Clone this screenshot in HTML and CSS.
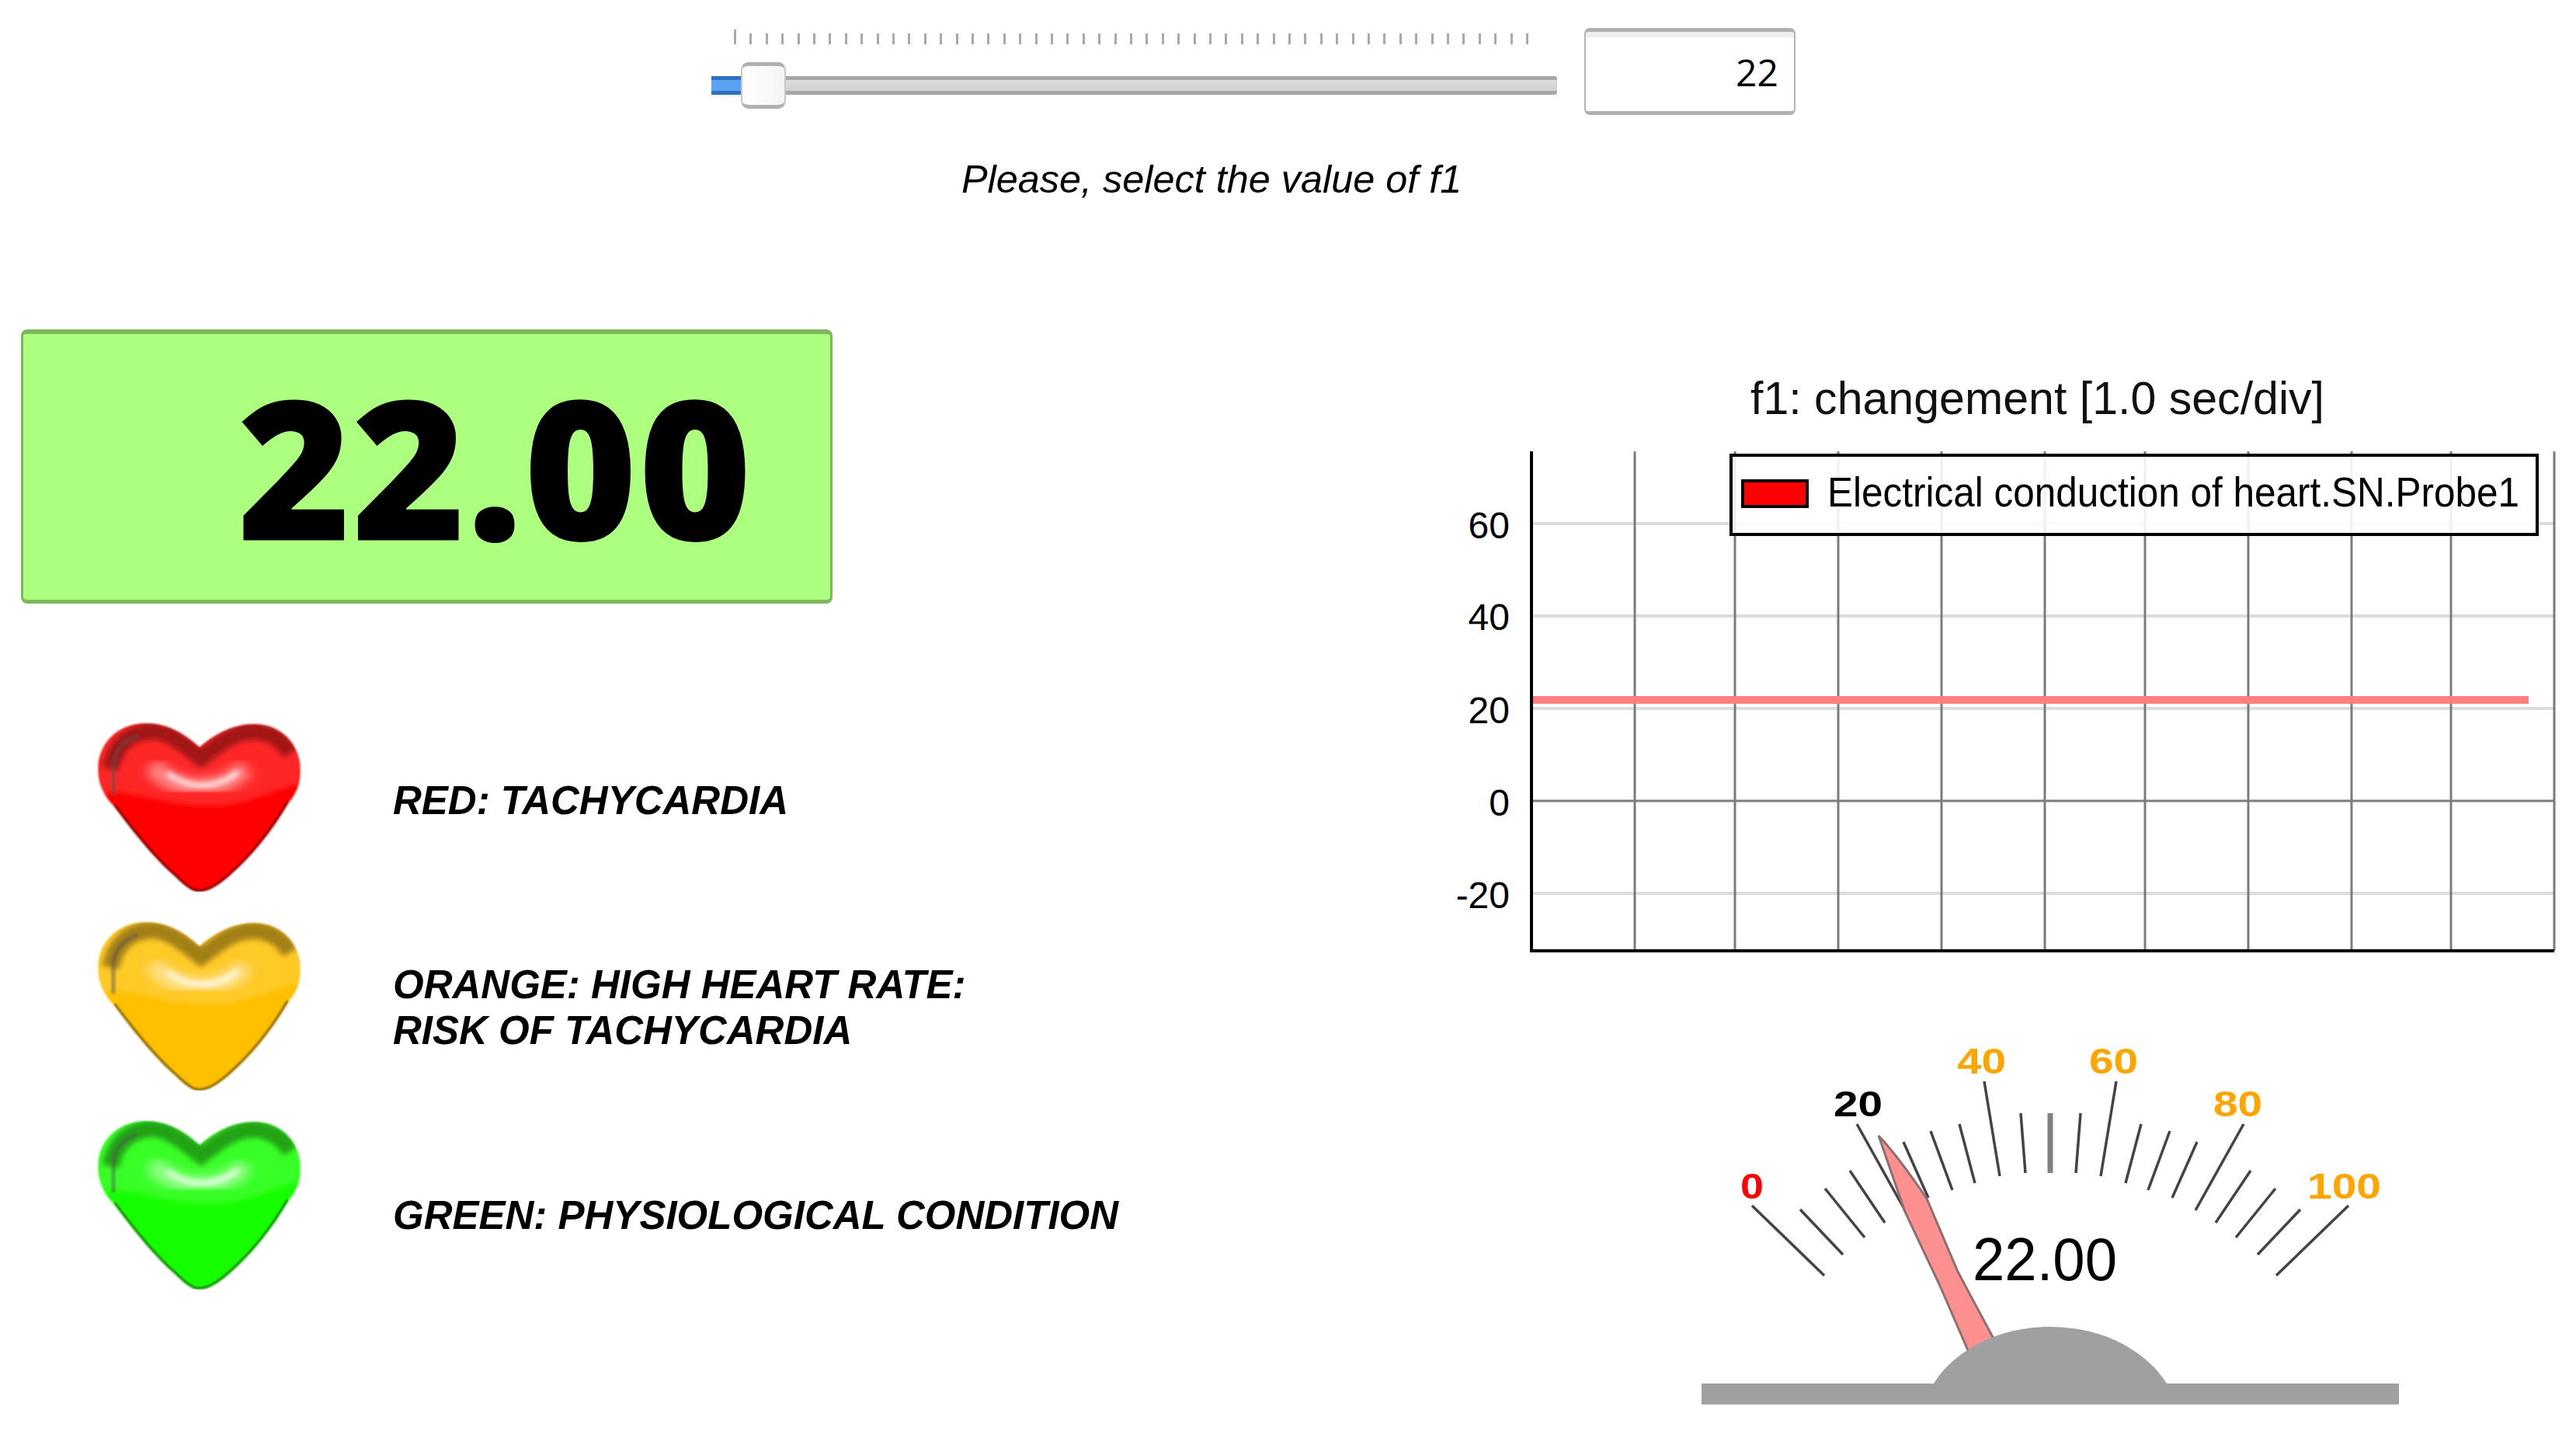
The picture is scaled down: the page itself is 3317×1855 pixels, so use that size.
FILE: index.html
```html
<!DOCTYPE html>
<html lang="en">
<head>
<meta charset="utf-8">
<title>Electrical conduction of heart</title>
<link rel="stylesheet" href="styles.css">
</head>
<body>
<svg class="defs" width="0" height="0" aria-hidden="true">
  <defs>
    <clipPath id="heart-clip"><path d="M132 32C110 12 88 1 62 1C25 1 0 28 0 60C0 80 8 96 20 108C44 140 72 176 100 200C112 212 122 220 131 220C144 220 156 212 170 200C200 174 226 142 248 104C258 92 263 80 263 62C263 28 238 2 203 2C176 2 153 14 132 32Z"/></clipPath>
    <filter id="soft" x="-20%" y="-20%" width="140%" height="140%"><feGaussianBlur stdDeviation="3"/></filter>
    <filter id="softer" x="-20%" y="-20%" width="140%" height="140%"><feGaussianBlur stdDeviation="7"/></filter>
    <filter id="edge" x="-5%" y="-5%" width="110%" height="110%"><feGaussianBlur stdDeviation="1"/></filter>
    <symbol id="heart" viewBox="0 0 263 220">
      <g filter="url(#edge)">
      <g clip-path="url(#heart-clip)">
        <rect width="263" height="220" fill="currentColor"/>
        <path d="M0 0H263V80C210 92 190 112 130 108C90 106 50 92 16 90L0 100Z" fill="#fff" opacity=".15" filter="url(#soft)"/>
        <path d="M20 108C44 140 72 176 100 200C112 212 122 220 131 220C144 220 156 212 170 200C200 174 226 142 248 104" fill="none" stroke="#000" stroke-opacity=".42" stroke-width="7"/>
        <path d="M16 60C22 34 36 16 62 12C92 8 112 30 134 46C156 30 176 10 206 12C226 14 240 24 250 40" fill="none" stroke="#000" stroke-opacity=".36" stroke-width="22" filter="url(#soft)"/>
        <path d="M20 94V58C20 38 34 22 52 18" fill="none" stroke="#555" stroke-opacity=".45" stroke-width="6"/>
        <path d="M70 56C90 78 110 84 134 84C156 84 176 76 192 58" fill="none" stroke="#fff" stroke-opacity=".45" stroke-width="24" filter="url(#softer)"/>
        <path d="M90 66C108 78 122 82 134 82C150 82 168 76 182 64" fill="none" stroke="#fff" stroke-opacity=".9" stroke-width="6" filter="url(#soft)"/>
      </g>
      </g>
    </symbol>
  </defs>
</svg>

<main class="page">
  <section class="controls">
    <div class="slider-row">
      <div class="slider">
        <div class="ticks"></div>
        <div class="track">
          <div class="track-fill"></div>
          <div class="thumb"></div>
        </div>
      </div>
      <div class="number-box">22</div>
    </div>
    <p class="caption">Please, select the value of f1</p>
  </section>

  <section class="panels">
    <div class="left-panel">
      <div class="readout">22.00</div>
      <ul class="legend-list">
        <li class="status-row">
          <svg class="heart heart-red"><use href="#heart"/></svg>
          <p class="status status-up">RED: TACHYCARDIA</p>
        </li>
        <li class="status-row">
          <svg class="heart heart-orange"><use href="#heart"/></svg>
          <p class="status status-mid">ORANGE: HIGH HEART RATE:<br>RISK OF TACHYCARDIA</p>
        </li>
        <li class="status-row">
          <svg class="heart heart-green"><use href="#heart"/></svg>
          <p class="status status-down">GREEN: PHYSIOLOGICAL CONDITION</p>
        </li>
      </ul>
    </div>

    <div class="right-panel">
      <svg class="chart" viewBox="1860 470 1457 770" width="1457" height="770">
        <text class="chart-title" x="2254" y="533" textLength="739" lengthAdjust="spacingAndGlyphs">f1: changement [1.0 sec/div]</text>
        <g class="grid-h">
          <line x1="1971" x2="3289" y1="674" y2="674"/>
          <line x1="1971" x2="3289" y1="793" y2="793"/>
          <line x1="1971" x2="3289" y1="912" y2="912"/>
          <line x1="1971" x2="3289" y1="1150" y2="1150"/>
        </g>
        <g class="grid-v">
          <line x1="2105" x2="2105" y1="581" y2="1224"/>
          <line x1="2234" x2="2234" y1="581" y2="1224"/>
          <line x1="2367" x2="2367" y1="581" y2="1224"/>
          <line x1="2500" x2="2500" y1="581" y2="1224"/>
          <line x1="2633" x2="2633" y1="581" y2="1224"/>
          <line x1="2762" x2="2762" y1="581" y2="1224"/>
          <line x1="2895" x2="2895" y1="581" y2="1224"/>
          <line x1="3028" x2="3028" y1="581" y2="1224"/>
          <line x1="3156" x2="3156" y1="581" y2="1224"/>
          <line x1="3289" x2="3289" y1="581" y2="1224"/>
          <line x1="1971" x2="3289" y1="1031" y2="1031"/>
        </g>
        <line class="series" x1="1971" x2="3256" y1="901" y2="901"/>
        <path class="axis" d="M1972 581V1224H3289"/>
        <g class="y-labels">
          <text x="1944" y="693">60</text>
          <text x="1944" y="811">40</text>
          <text x="1944" y="931">20</text>
          <text x="1944" y="1050">0</text>
          <text x="1944" y="1169">-20</text>
        </g>
        <rect class="legend-box" x="2229" y="586" width="1038" height="102"/>
        <rect class="legend-swatch" x="2244" y="619" width="83" height="33"/>
        <text class="legend-text" x="2353" y="652" textLength="891" lengthAdjust="spacingAndGlyphs">Electrical conduction of heart.SN.Probe1</text>
      </svg>

      <svg class="gauge" viewBox="2180 1340 920 475" width="920" height="475">
        <g class="tick">
          <line x1="2256" y1="1552" x2="2349" y2="1642"/>
          <line x1="2318" y1="1557" x2="2373" y2="1615"/>
          <line x1="2350" y1="1530" x2="2401" y2="1593"/>
          <line x1="2382" y1="1507" x2="2427" y2="1574"/>
          <line x1="2391" y1="1447" x2="2453" y2="1558"/>
          <line x1="2451" y1="1470" x2="2483" y2="1542"/>
          <line x1="2486" y1="1456" x2="2514" y2="1532"/>
          <line x1="2523" y1="1447" x2="2543" y2="1523"/>
          <line x1="2555" y1="1392" x2="2575" y2="1514"/>
          <line x1="2602" y1="1433" x2="2608" y2="1510"/>
          <line x1="2679" y1="1433" x2="2673" y2="1510"/>
          <line x1="2725" y1="1392" x2="2705" y2="1514"/>
          <line x1="2757" y1="1447" x2="2737" y2="1523"/>
          <line x1="2794" y1="1456" x2="2766" y2="1532"/>
          <line x1="2829" y1="1470" x2="2797" y2="1542"/>
          <line x1="2889" y1="1447" x2="2827" y2="1558"/>
          <line x1="2898" y1="1507" x2="2853" y2="1574"/>
          <line x1="2930" y1="1530" x2="2879" y2="1593"/>
          <line x1="2962" y1="1557" x2="2907" y2="1615"/>
          <line x1="3024" y1="1552" x2="2931" y2="1642"/>
        </g>
        <line class="tick-mid" x1="2640" y1="1433" x2="2640" y2="1510"/>
        <g class="scale">
          <text class="scale-red" x="2241" y="1543" textLength="30" lengthAdjust="spacingAndGlyphs">0</text>
          <text class="scale-black" x="2361" y="1437" textLength="63" lengthAdjust="spacingAndGlyphs">20</text>
          <text class="scale-orange" x="2520" y="1382" textLength="63" lengthAdjust="spacingAndGlyphs">40</text>
          <text class="scale-orange" x="2690" y="1382" textLength="63" lengthAdjust="spacingAndGlyphs">60</text>
          <text class="scale-orange" x="2850" y="1437" textLength="63" lengthAdjust="spacingAndGlyphs">80</text>
          <text class="scale-orange" x="2971" y="1543" textLength="95" lengthAdjust="spacingAndGlyphs">100</text>
        </g>
        <text class="gauge-value" x="2540" y="1648" textLength="186" lengthAdjust="spacingAndGlyphs">22.00</text>
        <path class="needle" d="M2419 1462C2438 1482 2462 1515 2481 1543L2521 1637L2568 1725L2537 1745L2497 1653L2453 1560Z"/>
        <path class="hub" d="M2191 1781H2490C2512 1745 2565 1708 2640 1708C2715 1708 2768 1745 2790 1781H3089V1808H2191Z"/>
      </svg>
    </div>
  </section>
</main>
</body>
</html>
```

FILE: styles.css
```css
* { box-sizing: border-box; }

html, body {
  margin: 0;
  padding: 0;
  background: #fff;
}

body {
  width: 3317px;
  height: 1855px;
  overflow: hidden;
  font-family: "Liberation Sans", Arial, sans-serif;
  color: #000;
}

.defs { position: absolute; }

.page {
  display: flex;
  flex-direction: column;
  width: 100%;
  height: 100%;
}

/* top slider */
.controls {
  height: 424px;
  padding: 34px 0 0 916px;
}

.slider-row {
  display: flex;
  gap: 35px;
}

.slider {
  width: 1089px;
  padding-top: 4px;
}

.ticks {
  width: 1023px;
  height: 19px;
  margin-left: 29px;
  background:
    linear-gradient(#a8a8a8, #a8a8a8) 0 0 / 3px 5px no-repeat,
    linear-gradient(#fff 0 5px, transparent 5px),
    repeating-linear-gradient(90deg, #a8a8a8 0 3px, transparent 3px 20.4px);
}

.track {
  position: relative;
  height: 24px;
  margin-top: 41px;
  border-radius: 3px;
  border-top: 5px solid #a8a8a8;
  border-bottom: 5px solid #a8a8a8;
  background: linear-gradient(#dcdcdc, #d2d2d2);
}

.track-fill {
  width: 38px;
  height: 100%;
  background: #5aa2f2;
  box-shadow: 0 -5px 0 #2d70bd, 0 5px 0 #2d70bd;
}

.thumb {
  position: absolute;
  left: 38px;
  top: -23px;
  width: 58px;
  height: 60px;
  border: 2px solid #c8c8c8;
  border-top: 5px solid #b0b0b0;
  border-bottom: 5px solid #b0b0b0;
  border-radius: 10px;
  background: linear-gradient(90deg, #fff, #f4f4f4);
}

.number-box {
  width: 272px;
  height: 112px;
  margin-top: 2px;
  padding: 24px 20px 0 0;
  border: 2px solid #b4b4b4;
  border-top: 5px solid #b0b0b0;
  border-bottom: 5px solid #b0b0b0;
  border-radius: 7px;
  background: linear-gradient(#eee 0 7px, #fff 7px);
  font-family: "Open Sans", sans-serif;
  font-size: 48px;
  line-height: 56px;
  text-align: right;
}

.caption {
  margin: 55px 0 0 322px;
  font-size: 50.4px;
  line-height: 56px;
  font-style: italic;
}

/* main area */
.panels {
  display: flex;
  flex: 1;
}

.left-panel {
  width: 1860px;
  padding-left: 27px;
}

.readout {
  width: 1045px;
  height: 353px;
  padding: 0 0 0 276px;
  border: 3px solid #7eb85c;
  border-top: 6px solid #7eb85c;
  border-bottom: 5px solid #7eb85c;
  border-radius: 8px;
  background: #acff7f;
  font-family: "Open Sans", sans-serif;
  font-size: 250px;
  font-weight: 800;
  line-height: 338px;
  letter-spacing: 1px;
}

.legend-list {
  display: flex;
  flex-direction: column;
  gap: 38px;
  margin: 153px 0 0;
  padding: 0 0 0 98px;
  list-style: none;
}

.status-row {
  display: flex;
  align-items: center;
  gap: 118px;
  height: 218px;
}

.heart {
  flex: none;
  width: 263px;
  height: 218px;
}

.heart-red { color: #ff0000; }
.heart-orange { color: #ffc000; }
.heart-green { color: #16ff00; }

.status {
  margin: 0;
  font-size: 51px;
  line-height: 59px;
  font-weight: 700;
  font-style: italic;
  white-space: nowrap;
}

.status-up { margin-bottom: 18px; }
.status-mid { margin-top: 4px; }
.status-down { margin-top: 26px; }

.right-panel {
  display: flex;
  flex-direction: column;
  padding-top: 46px;
}

.chart, .gauge { display: block; }

.gauge {
  margin: 100px 0 0 320px;
}

/* chart */
.chart text, .gauge text {
  font-family: "Liberation Sans", Arial, sans-serif;
}

.chart-title { font-size: 60px; fill: #111; }

.grid-h line { stroke: #dcdcdc; stroke-width: 4; }
.grid-v line { stroke: #7c7c7c; stroke-width: 3; }
.series { stroke: #ff8080; stroke-width: 10; }
.axis { fill: none; stroke: #000; stroke-width: 4; }

.y-labels text {
  font-size: 48px;
  text-anchor: end;
}

.legend-box {
  fill: #fff;
  fill-opacity: .88;
  stroke: #000;
  stroke-width: 4;
}

.legend-swatch { fill: #ff0000; stroke: #000; stroke-width: 4; }
.legend-text { font-size: 53px; }

/* gauge */
.tick line { stroke: #444; stroke-width: 3.5; }
.tick-mid { stroke: #808080; stroke-width: 7; }

.scale text {
  font-size: 46px;
  font-weight: 700;
}

.scale-red { fill: #ff0000; }
.scale-black { fill: #000; }
.scale-orange { fill: #ffa500; }

.gauge-value { font-size: 78px; }

.needle {
  fill: #ff9090;
  stroke: #8a7070;
  stroke-width: 3;
}

.hub { fill: #a0a0a0; }
```
